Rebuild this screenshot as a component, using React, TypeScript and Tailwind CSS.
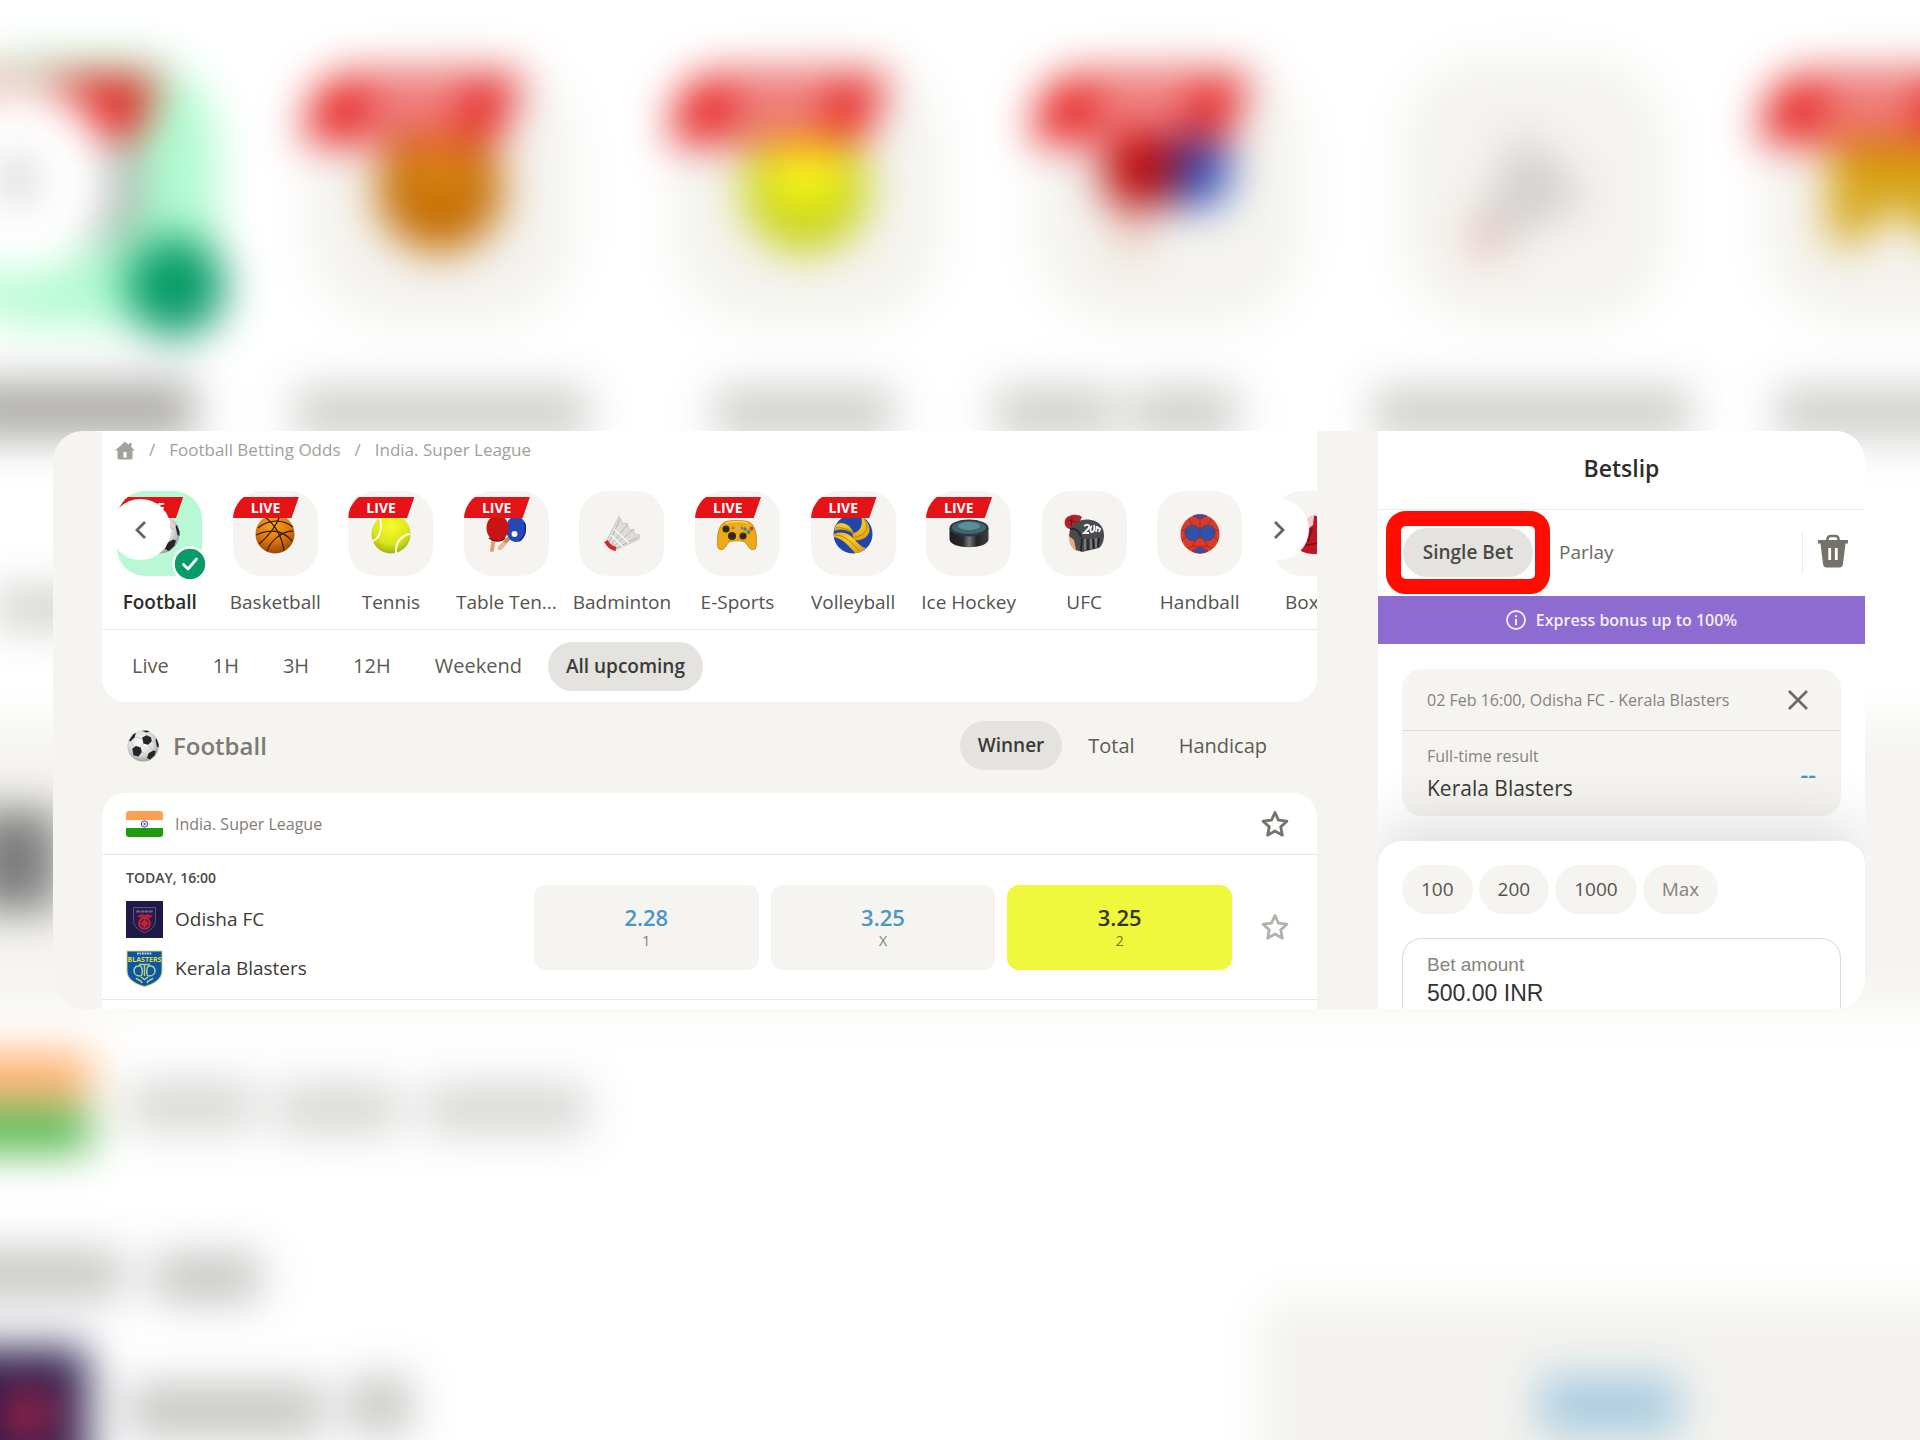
import { useState } from 'react'
import type { ReactNode } from 'react'

function BallGradients() {
  return (
    <svg className="absolute h-0 w-0" aria-hidden="true">
      <defs>
        <radialGradient id="orange" cx="0.45" cy="0.25" r="0.8">
          <stop offset="0" stopColor="#f9a61c" />
          <stop offset="0.55" stopColor="#dc760c" />
          <stop offset="1" stopColor="#8f3f06" />
        </radialGradient>
        <radialGradient id="lime" cx="0.5" cy="0.3" r="0.75">
          <stop offset="0" stopColor="#f7fb2c" />
          <stop offset="0.6" stopColor="#dbe51b" />
          <stop offset="1" stopColor="#93a80d" />
        </radialGradient>
        <radialGradient id="chalk" cx="0.45" cy="0.4" r="0.65">
          <stop offset="0" stopColor="#ffffff" />
          <stop offset="0.6" stopColor="#dcdcdc" />
          <stop offset="1" stopColor="#8f8f8f" />
        </radialGradient>
        <radialGradient id="gold" cx="0.45" cy="0.3" r="0.8">
          <stop offset="0" stopColor="#fbd02a" />
          <stop offset="1" stopColor="#dc9912" />
        </radialGradient>
        <linearGradient id="puck" x1="0" x2="1">
          <stop offset="0" stopColor="#1c1c1e" />
          <stop offset="0.35" stopColor="#2c2c2e" />
          <stop offset="0.5" stopColor="#77777a" />
          <stop offset="0.7" stopColor="#242426" />
          <stop offset="1" stopColor="#3f3f42" />
        </linearGradient>
      </defs>
    </svg>
  )
}

function FootballIcon({ className = 'h-10 w-10' }: { className?: string }) {
  return (
    <svg viewBox="0 0 40 40" className={className} aria-hidden="true">
      <circle cx="20" cy="20" r="19.5" fill="url(#chalk)" />
      <g fill="#26262a">
        <path d="M19 9.500l5.500-3 5.500 2.500 1 5-4.500 4.500-6-1.500z" />
        <path d="M6.500 23.500l4.500-3.500 6 1.500 1.500 6-4 5.500-6.500-1.500z" />
        <path d="M27 29l6-3.500 3 1-1.500 5-5.500 5.500-4-2z" />
        <path d="M2.500 13l5-7.500 3.500-2-1.500 6-5.500 5z" />
        <path d="M35.500 12l1.500-1 2.500 6.500v4.500l-2-1z" />
        <path d="M18.500 1l6-.5 4 1.500-4 1z" />
      </g>
      <path d="M11 9l8 2M20 17l-4 5M27 18.500l5 7M18.500 27l7 5M31 14l5 2M5 14l3 7" stroke="#c4c4c4" fill="none" />
    </svg>
  )
}

function BasketballIcon() {
  return (
    <svg viewBox="0 0 40 40" className="h-10 w-10">
      <circle cx="20" cy="20" r="19.500" fill="url(#orange)" />
      <path
        d="M3 14C14 5 28 5 38 13M1 21c12-6 26-6 36 6M10 3c9 7 17 19 19 34M25 1c-3 10-12 22-21 29M12 37c3-9 14-20 26-20"
        fill="none"
        stroke="#3d1d08"
        strokeWidth="1.300"
      />
    </svg>
  )
}

function TennisIcon() {
  return (
    <svg viewBox="0 0 40 40" className="h-10 w-10">
      <circle cx="20" cy="20" r="19.500" fill="url(#lime)" />
      <path d="M9 4c3 11-1 22-8 23M39 20c-8 1-15 8-14 19" fill="none" stroke="#fbfce4" strokeWidth="2" />
    </svg>
  )
}

function TableTennisIcon() {
  return (
    <svg viewBox="0 0 40 40" className="h-10 w-10">
      <path d="M22 25l-8 9" stroke="#c98c52" strokeWidth="4" strokeLinecap="round" />
      <path d="M18 30l-4 4" stroke="#e8b9a0" strokeWidth="4" strokeLinecap="round" />
      <ellipse cx="30" cy="15" rx="10" ry="13" fill="#2747b4" />
      <path d="M38 8c3 6 1 16-5 19" stroke="#122a85" strokeWidth="1.500" fill="none" />
      <path d="M8 23l-2 13" stroke="#dd9f74" strokeWidth="4" strokeLinecap="round" />
      <ellipse cx="11.500" cy="14" rx="11" ry="13" fill="#c91416" />
      <path d="M3 24c5 4 12 4 16 0" stroke="#7c0a0c" strokeWidth="1.500" fill="none" />
      <circle cx="28.500" cy="20" r="3" fill="#f4f4fa" />
    </svg>
  )
}

function BadmintonIcon() {
  return (
    <svg viewBox="0 0 40 40" className="h-10 w-10">
      <path
        d="M4 28L17 2l4 8 4-1 2 7 5-1 0 5 6 1-1 4-25 12z"
        fill="#deddda"
        stroke="#c3c2be"
        strokeWidth="0.800"
        strokeLinejoin="round"
      />
      <path d="M7 29L18 5M9 31L25 11M11 33l20-17M13 35l23-12" stroke="#b5b4b0" fill="none" />
      <path d="M12 15l15 14M9 21l12 12" stroke="#fafaf8" strokeWidth="1.200" fill="none" />
      <path d="M4 27c2 5 5 8 10 9l-4 3c-5 1-8-2-8-7z" fill="#f1efec" />
      <path d="M4 27c2 4 5 7 10 8" stroke="#cf2a28" strokeWidth="4" fill="none" />
    </svg>
  )
}

function GamepadIcon() {
  return (
    <svg viewBox="0 0 40 40" className="h-10 w-10">
      <path
        d="M8 8c4-2 20-2 24 0 4 2 6 6 7 12 1 7 1 13-1 15-4 2-6-1-9-6-2-3-16-3-18 0-3 5-5 8-9 6-2-2-2-8-1-15 1-6 3-10 7-12z"
        fill="#eea916"
        stroke="#c27e0a"
        strokeWidth="0.800"
      />
      <path d="M9 9c6-2 16-2 22 0" stroke="#fbd75b" strokeWidth="1.500" fill="none" />
      <circle cx="9" cy="15" r="3.500" fill="#30280f" />
      <circle cx="15" cy="22" r="4" fill="#30280f" />
      <circle cx="26" cy="22" r="3.500" fill="#30280f" />
      <circle cx="16" cy="14" r="1.200" fill="#8a7a30" />
      <circle cx="20.500" cy="14" r="2" fill="#c2ba7b" />
      <circle cx="25" cy="14" r="1.200" fill="#8a7a30" />
      <circle cx="31" cy="11.500" r="1.700" fill="#d4c51a" />
      <circle cx="34.500" cy="14.500" r="1.900" fill="#d0342a" />
      <circle cx="28" cy="15" r="1.700" fill="#3c7fb5" />
      <circle cx="31.500" cy="18" r="1.900" fill="#3e9a47" />
    </svg>
  )
}

function VolleyballIcon() {
  return (
    <svg viewBox="0 0 40 40" className="h-10 w-10">
      <circle cx="20" cy="20" r="19.500" fill="#1f46ad" />
      <path d="M3 11C8 7 17 9 21 20c-6-4-13-6-20-3z" fill="url(#gold)" />
      <path d="M28 2c7 5 10 12 8 17-3 6-9 8-15 7l-2-7c7 0 12-7 9-17z" fill="url(#gold)" />
      <path d="M1 20c8-3 15-1 20 5 5 5 7 8 12 9-3 3-7 5-11 5C15 31 10 25 1 23z" fill="url(#gold)" />
      <path d="M3 14c7-1 13 1 18 6M32 6c4 7 1 16-10 17M2 21c10 0 17 8 24 16" stroke="#b27a0c" strokeWidth="0.900" fill="none" />
    </svg>
  )
}

function PuckIcon() {
  return (
    <svg viewBox="0 0 40 40" className="h-10 w-10">
      <path d="M.5 14v11c0 11 39 11 39 0V14z" fill="url(#puck)" />
      <ellipse cx="20" cy="14" rx="19.500" ry="8.500" fill="#2a3a40" />
      <ellipse cx="20" cy="13.500" rx="17" ry="6.500" fill="#41666f" />
      <ellipse cx="20" cy="12" rx="11" ry="4" fill="#5d8f9b" />
    </svg>
  )
}

function UfcIcon() {
  return (
    <svg viewBox="0 0 40 40" className="h-10 w-10">
      <path d="M5 20c-1 8 2 15 8 17l4-14z" fill="#eba980" />
      <path d="M1 6c2-5 12-7 17-3l-4 8-9 4C1 13 0 10 1 6z" fill="#b3222c" />
      <path d="M4 6l11 3M8 3l-1 9" stroke="#6f0f18" fill="none" />
      <path d="M6 15c3-5 10-11 21-9 8 1 13 7 13 15 0 6-2 11-5 13l-17 4-6-2-2-10-5-4z" fill="#4a4b4e" />
      <path d="M6 15c4-1 9 1 11 8" stroke="#26272a" strokeWidth="2" fill="none" />
      <path d="M18 24l-1 13M24 25v11M29 25l1 10M35 24l-1 9" stroke="#1c1c1f" strokeWidth="1.500" fill="none" />
      <path d="M21 25v11M27 25v10M32 24v10" stroke="#929396" strokeWidth="1.300" fill="none" />
      <path
        d="M20 12c4-3 7 0 4 3l-4 4h5M28 12c-2 1-2 6 0 6s3-4 2-7M33 12l-1 6M33 13l3 2-1 3"
        stroke="#f3f3f3"
        strokeWidth="1.900"
        fill="none"
      />
    </svg>
  )
}

function HandballIcon() {
  return (
    <svg viewBox="0 0 40 40" className="h-10 w-10">
      <circle cx="20" cy="20" r="19.500" fill="#d83a2b" />
      <g fill="#2e53a8" stroke="#8e2a35" strokeWidth="0.600">
        <path d="M5 16l3-4 6-1 6 4v8l-5 4-6-1-4-5z" />
        <path d="M20 15l6-4 6 1 3 4v5l-4 5-6 1-5-4z" />
        <path d="M13 2c4-2 10-2 14 0l-7 3z" />
        <path d="M12 37l8-4 8 4c-4 3-12 3-16 0z" />
      </g>
      <path
        d="M20 5v10M12 11L9 5M28 11l3-6M15 27l-2 5 7 1M25 27l2 5-7 1M5 16l-4 1M35 16l4 1M6 22l-4 5M34 22l4 5M13 32l-5 2M27 32l5 2"
        stroke="#97241d"
        strokeWidth="0.700"
        fill="none"
      />
    </svg>
  )
}

function BoxingIcon() {
  return (
    <svg viewBox="0 0 40 40" className="h-10 w-10">
      <path d="M12 12C11 3 16 1 23 2s15 8 13 17c-1 5-4 7-5 9l2 8c-6 4-18 6-27 1 0-8 6-12 6-25z" fill="#bd1624" />
      <path d="M9 7c3-4 6-5 10-5l-1 9-5 4z" fill="#f0ccd0" />
      <path d="M11 31l18-3M17 14l-4 14" stroke="#73101a" strokeWidth="1.500" fill="none" />
    </svg>
  )
}

function HomeIcon() {
  return (
    <svg viewBox="0 0 20 19" className="h-[19px] w-5" fill="none" aria-hidden="true">
      <path d="M10 0.500L14 4V2h2.500v4.200L20 9.500h-2.500V16a2 2 0 01-2 2.500h-11a2 2 0 01-2-2.500V9.500H0z" fill="#a3a199" />
      <path d="M8.500 11h3v5.500h-3z" fill="#fff" />
    </svg>
  )
}

function Chevron({ d }: { d: string }) {
  return (
    <svg viewBox="0 0 16 20" className="h-5 w-4" fill="none" stroke="#66645e" strokeWidth="2.800" aria-hidden="true">
      <path d={d} />
    </svg>
  )
}

function StarIcon() {
  return (
    <svg viewBox="0 0 28 28" className="h-7 w-7" fill="none" stroke="currentColor" strokeWidth="2.800" aria-hidden="true">
      <path
        d="M14 2.500l3.500 7.700 8.400 1-6.200 5.700 1.700 8.300L14 21l-7.400 4.200 1.700-8.300-6.200-5.700 8.400-1z"
        strokeLinejoin="round"
      />
    </svg>
  )
}

function TrashIcon() {
  return (
    <svg viewBox="0 0 30 34" className="h-[34px] w-[30px]" fill="none" aria-hidden="true">
      <path d="M9.500 6.500V5a3 3 0 013-3h5a3 3 0 013 3v1.500" stroke="#75726a" strokeWidth="2.600" />
      <path d="M0 6h30v3.500h-2.500L25 30a4 4 0 01-4 3.500H9A4 4 0 015 30L2.500 9.500H0z" fill="#75726a" />
      <path d="M11.700 14v12M18.300 14v12" stroke="#fff" strokeWidth="2.800" />
    </svg>
  )
}

function IndiaFlag() {
  return (
    <svg viewBox="0 0 37 26" className="h-[26px] w-[37px] rounded-[3px]" aria-hidden="true">
      <path fill="#ff9f50" d="M0 0h37v9H0z" />
      <path fill="#fff" d="M0 9h37v8H0z" />
      <path fill="#1f9a10" d="M0 17h37v9H0z" />
      <circle cx="18.500" cy="13" r="3.200" fill="#e4e4f6" stroke="#4a4bb0" />
      <circle cx="18.500" cy="13" r="1" fill="#4a4bb0" />
    </svg>
  )
}

function OdishaLogo() {
  return (
    <svg viewBox="0 0 37 37" className="h-[37px] w-[37px]" aria-hidden="true">
      <path fill="#1d1a48" d="M0 0h37v37H0z" />
      <path d="M7.500 6.500h22v13c0 6-5 10-11 12-6-2-11-6-11-12z" fill="#2a1a4a" stroke="#65568a" strokeWidth="0.900" />
      <path d="M10.500 10.500h4M15.500 10.500h3M19.500 10.500h3M23.500 10.500h3" stroke="#8f83b0" strokeWidth="2" strokeDasharray="1.400 .5" />
      <path d="M11 15l5-2 3 1 3-1 5 2-3 2h-10z" fill="#b3203c" />
      <circle cx="18.500" cy="22.500" r="5.500" fill="#6e1838" stroke="#bd2842" strokeWidth="1.600" />
      <circle cx="18.500" cy="22.500" r="2.200" fill="none" stroke="#d02b45" strokeWidth="1.200" />
      <path d="M18.500 17v11M13 22.500h11" stroke="#d02b45" strokeWidth="0.700" />
    </svg>
  )
}

function KeralaLogo() {
  return (
    <svg viewBox="0 0 37 37" className="h-[37px] w-[37px]" aria-hidden="true">
      <path d="M1 1h35v20c0 8-8 13-17.500 15.500C9 34 1 29 1 21z" fill="#0d56a5" stroke="#c9d36a" strokeWidth="1" />
      <path d="M11 3.500h15" stroke="#c6d8ec" strokeWidth="2" strokeDasharray="1.800 .7" />
      <text
        x="18.500"
        y="11.500"
        textAnchor="middle"
        fontFamily="Open Sans, sans-serif"
        fontWeight="700"
        fontSize="7"
        fill="#e3dd3c"
      >
        BLASTERS
      </text>
      <path
        d="M13 14.500h11M14 16c-8-1-8 10 0 10 3 0 3-9 0-10zM23 16c8-1 8 10 0 10-3 0-3-9 0-10zM18.500 15v11M15 27l3.500 2.500L22 27M10 28c2 3 5 1 6 5M27 28c-2 3-5 1-6 5"
        stroke="#b6cf83"
        strokeWidth="1.500"
        fill="none"
      />
    </svg>
  )
}

type Sport = { name: string; live?: boolean; icon: ReactNode }

const SPORTS: Sport[] = [
  { name: 'Football', live: true, icon: <FootballIcon /> },
  { name: 'Basketball', live: true, icon: <BasketballIcon /> },
  { name: 'Tennis', live: true, icon: <TennisIcon /> },
  { name: 'Table Ten...', live: true, icon: <TableTennisIcon /> },
  { name: 'Badminton', icon: <BadmintonIcon /> },
  { name: 'E-Sports', live: true, icon: <GamepadIcon /> },
  { name: 'Volleyball', live: true, icon: <VolleyballIcon /> },
  { name: 'Ice Hockey', live: true, icon: <PuckIcon /> },
  { name: 'UFC', icon: <UfcIcon /> },
  { name: 'Handball', icon: <HandballIcon /> },
  { name: 'Boxing', icon: <BoxingIcon /> },
]

const PERIODS = ['Live', '1H', '3H', '12H', 'Weekend', 'All upcoming']
const MARKETS = ['Winner', 'Total', 'Handicap']
const ODDS = [
  { outcome: '1', price: '2.28' },
  { outcome: 'X', price: '3.25' },
  { outcome: '2', price: '3.25' },
]
const TEAMS = [
  { name: 'Odisha FC', logo: <OdishaLogo /> },
  { name: 'Kerala Blasters', logo: <KeralaLogo /> },
]
const STAKES = ['100', '200', '1000', 'Max']

function PillGroup({ items, value, onChange }: { items: string[]; value: string; onChange: (v: string) => void }) {
  return (
    <div className="flex gap-2">
      {items.map((item) => (
        <button
          key={item}
          type="button"
          onClick={() => onChange(item)}
          className={`h-[49px] rounded-full px-[18px] whitespace-nowrap ${
            item === value ? 'bg-[#e4e3df] text-[19px] font-semibold text-[#3b3a37]' : 'text-[20px] text-[#5c5a55]'
          }`}
        >
          {item}
        </button>
      ))}
    </div>
  )
}

/* Enlarged, out-of-focus view of the sport list that fills the window behind the card */
function Backdrop() {
  return (
    <svg
      className="absolute inset-0 h-full w-full"
      viewBox="135 473 610 457"
      preserveAspectRatio="xMidYMid slice"
      aria-hidden="true"
    >
      <defs>
        <filter id="soft" x="-10%" y="-10%" width="120%" height="120%" colorInterpolationFilters="sRGB">
          <feGaussianBlur stdDeviation="7" />
        </filter>
      </defs>
      <g filter="url(#soft)">
        <path fill="#fff" d="M80 420h720v570H80z" />
        <path fill="#f5f4f0" d="M80 702h720v91H80z" />
        <rect x="118" y="491" width="86" height="85" rx="28" fill="#b0fbd0" />
        {[233, 349, 464, 580, 695].map((x) => (
          <rect key={x} x={x} y="491" width="85" height="85" rx="28" fill="#f4f3ef" />
        ))}
        <circle cx="160" cy="533" r="20" fill="#9b9b9b" />
        <circle cx="275" cy="533" r="20" fill="#c46c00" />
        <circle cx="275" cy="526" r="8" fill="#e09420" />
        <circle cx="391" cy="533" r="20" fill="#c6d010" />
        <circle cx="391" cy="527" r="12" fill="#fbf81e" />
        <path d="M492 540l8 12-9 0z" fill="#dca27b" />
        <circle cx="514" cy="527" r="12" fill="#2747b4" />
        <circle cx="497" cy="528" r="12" fill="#b80808" />
        <path d="M617 514l23 22-26 12-8-4z" fill="#d0cfcc" />
        <path d="M602 541l12 9-9 5z" fill="#e09896" />
        <path d="M716 518h43v32h-9l-10-10h-8l-5 10h-11z" fill="#d6a312" />
        {[233, 349, 464, 695].map((x) => (
          <g key={x}>
            <path d={`M${x - 1} 518c0-10 4-18 12-21h57l-8 21z`} fill="#e61818" />
            <path d={`M${x + 18} 501h32v13h-32z`} fill="#f29090" />
          </g>
        ))}
        <path d="M118 518c0-10 4-18 12-21h56l-8 21z" fill="#e61818" />
        <circle cx="141" cy="530" r="31" fill="#fff" />
        <path d="M144 524l-6 6 6 6" stroke="#777" strokeWidth="3" fill="none" />
        <circle cx="191" cy="564" r="16" fill="#079b68" />
        <path fill="#acaba8" d="M121 594h76v18h-76z" />
        <path
          fill="#cfcecb"
          d="M229 596h93v16h-93zM362 596h57v16h-57zM451 596h38v16h-38zM494 596h34v16h-34zM571 596h101v16H571zM699 596h78v16h-78z"
        />
        <path fill="#cfcecb" d="M133 660h36v12h-36zM214 660h24v12h-24z" />
        <path fill="#7c7c7c" d="M126 730h28v32h-28z" />
        <path fill="#ffa65c" d="M116 808h48v14h-48z" />
        <path fill="#3fb038" d="M116 825h48v13h-48z" />
        <path fill="#d8d7d5" d="M176 816h40v16h-40zM223 817h39v16h-39zM270 817h52v16h-52z" />
        <path fill="#c4c3c1" d="M116 870h58v15h-58zM184 871h34v15h-34z" />
        <path fill="#201848" d="M116 901h47v43h-47z" />
        <circle cx="144" cy="922" r="10" fill="#a02448" />
        <path fill="#c6c5c3" d="M176 912h62v17h-62zM246 910h20v18h-20z" />
        <rect x="535" y="885" width="260" height="85" rx="10" fill="#f3f2ee" />
        <path fill="#a6cae0" d="M624 910h44v18h-44z" />
      </g>
    </svg>
  )
}

function SportNav() {
  return (
    <div className="relative overflow-hidden">
      <ul className="-mr-14 grid grid-cols-11">
        {SPORTS.map((sport, i) => (
          <li key={sport.name}>
            <a href="#sport" className="flex flex-col items-center">
              <span className="relative">
                <span
                  className={`relative flex h-[85px] w-[85px] items-center justify-center overflow-hidden rounded-[28px] ${
                    i === 0 ? 'bg-[#b9f8d4]' : 'bg-[#f5f4f0]'
                  }`}
                >
                  {sport.icon}
                  {sport.live && (
                    <span className="absolute top-[6px] left-0 h-[21px] w-[66px] bg-[#e51317] pl-[18px] text-[14px] leading-[21px] font-bold text-white [clip-path:polygon(0_0,100%_0,89%_100%,0_100%)]">
                      LIVE
                    </span>
                  )}
                </span>
                {i === 0 && (
                  <svg viewBox="0 0 36 36" className="absolute -right-[6px] -bottom-[6px] z-10 h-9 w-9" aria-hidden="true">
                    <circle cx="18" cy="18" r="16.500" fill="#079b68" stroke="#fff" strokeWidth="2.500" />
                    <path
                      d="M11.500 18.500l4.500 4.500 8.500-10"
                      fill="none"
                      stroke="#fff"
                      strokeWidth="2.800"
                      strokeLinecap="round"
                      strokeLinejoin="round"
                    />
                  </svg>
                )}
              </span>
              <span
                className={`mt-3 text-[19px] leading-7 whitespace-nowrap ${
                  i === 0 ? 'font-semibold text-[#2d2c29]' : 'text-[#54524e]'
                }`}
              >
                {sport.name}
              </span>
            </a>
          </li>
        ))}
      </ul>
      <button
        type="button"
        aria-label="Previous sports"
        className="absolute top-2 left-2 flex h-[61px] w-[61px] items-center justify-center rounded-full bg-white"
      >
        <Chevron d="M12 2L4 10l8 8" />
      </button>
      <button
        type="button"
        aria-label="More sports"
        className="absolute top-2 right-2 flex h-[61px] w-[61px] items-center justify-center rounded-full bg-white"
      >
        <Chevron d="M4 2l8 8-8 8" />
      </button>
    </div>
  )
}

function Sportsbook() {
  const [period, setPeriod] = useState('All upcoming')
  const [market, setMarket] = useState('Winner')
  const [picked, setPicked] = useState('2')

  return (
    <main className="flex min-w-0 flex-1 flex-col pr-[61px] pl-[49px]">
      <section className="rounded-b-3xl bg-white">
        <nav className="mb-[22px] flex h-[38px] items-center gap-[14px] pl-[13px] text-[17px] text-[#a19f99]">
          <a href="#home" aria-label="Home">
            <HomeIcon />
          </a>
          <span>/</span>
          <a href="#football">Football Betting Odds</a>
          <span>/</span>
          <a href="#league">India. Super League</a>
        </nav>
        <SportNav />
        <div className="mt-[13px] flex h-[73px] items-center border-t border-[#ebeae8] px-3">
          <PillGroup items={PERIODS} value={period} onChange={setPeriod} />
        </div>
      </section>

      <header className="flex h-[91px] items-center justify-between pr-8 pb-1 pl-[25px]">
        <h1 className="flex items-center gap-[14px] text-[24px] font-semibold text-[#7d7a73]">
          <FootballIcon className="h-8 w-8" />
          Football
        </h1>
        <PillGroup items={MARKETS} value={market} onChange={setMarket} />
      </header>

      <section className="flex-1 rounded-t-3xl bg-white">
        <div className="flex h-[62px] items-center border-b border-[#e8e7e5] pl-6">
          <IndiaFlag />
          <h2 className="ml-3 flex-1 text-[16px] text-[#7f7d77]">India. Super League</h2>
          <button type="button" aria-label="Add league to favourites" className="flex w-[85px] justify-center text-[#75736c]">
            <StarIcon />
          </button>
        </div>
        <div className="flex h-[145px] items-center border-b border-[#e8e7e5] pl-6">
          <div className="flex-1">
            <div className="text-[14px] leading-5 font-semibold text-[#4a4945]">TODAY, 16:00</div>
            <div className="mt-[13px] flex flex-col gap-3">
              {TEAMS.map((team) => (
                <div key={team.name} className="flex items-center gap-3 text-[19px] leading-7 text-[#3b3a37]">
                  {team.logo}
                  {team.name}
                </div>
              ))}
            </div>
          </div>
          <div className="grid w-[698px] grid-cols-3 gap-3">
            {ODDS.map((odd) => (
              <button
                key={odd.outcome}
                type="button"
                onClick={() => setPicked(odd.outcome)}
                className={`flex h-[85px] flex-col items-center justify-center rounded-xl ${
                  picked === odd.outcome ? 'bg-[#f0f83e]' : 'bg-[#f5f4f0]'
                }`}
              >
                <span
                  className={`text-[22px] leading-7 font-semibold ${
                    picked === odd.outcome ? 'text-[#343510]' : 'text-[#4a95c8]'
                  }`}
                >
                  {odd.price}
                </span>
                <span className={`text-[14px] leading-5 ${picked === odd.outcome ? 'text-[#72751f]' : 'text-[#7f7d77]'}`}>
                  {odd.outcome}
                </span>
              </button>
            ))}
          </div>
          <button type="button" aria-label="Add match to favourites" className="flex w-[85px] justify-center text-[#b3b1ab]">
            <StarIcon />
          </button>
        </div>
      </section>
    </main>
  )
}

function Betslip() {
  const [amount, setAmount] = useState('500.00 INR')

  return (
    <aside className="w-[487px] shrink-0 overflow-hidden bg-white">
      <h2 className="flex h-[79px] items-center justify-center border-b border-[#efeeec] pb-1 text-[23px] font-semibold text-[#2d2c29]">
        Betslip
      </h2>
      <div className="flex h-[86px] items-center pr-[17px] pb-px pl-[25px] text-[19px]">
        <div className="relative">
          <button type="button" className="h-[49px] w-[130px] rounded-full bg-[#e4e3df] font-semibold text-[#4a4945]">
            Single Bet
          </button>
          <span className="pointer-events-none absolute -inset-[17px] rounded-[20px] border-[15px] border-[#ff0d00]" />
        </div>
        <button type="button" className="ml-2 h-[49px] px-[18px] text-[#6b6963]">
          Parlay
        </button>
        <span className="ml-auto h-[42px] border-l border-[#ebeae8]" />
        <button type="button" aria-label="Clear betslip" className="-mt-1 ml-[15px]">
          <TrashIcon />
        </button>
      </div>
      <div className="flex h-12 items-center justify-center gap-[10px] bg-[#8d6bd0] text-[16px] font-semibold text-[#f3eefc]">
        <svg viewBox="0 0 20 20" className="h-5 w-5" fill="none" stroke="currentColor" strokeWidth="1.800" aria-hidden="true">
          <circle cx="10" cy="10" r="9" />
          <path d="M10 9v6M10 5.200v2" strokeWidth="2" />
        </svg>
        Express bonus up to 100%
      </div>

      <div className="px-6 py-[25px]">
        <div className="rounded-[20px] bg-[#f5f4f0]">
          <div className="flex h-[62px] items-center justify-between border-b border-[#dcdbd7] pr-[33px] pl-[25px]">
            <span className="text-[16px] text-[#85837c]">02 Feb 16:00, Odisha FC - Kerala Blasters</span>
            <button type="button" aria-label="Remove bet">
              <svg viewBox="0 0 20 20" className="h-5 w-5" stroke="#6b6963" strokeWidth="2.600" aria-hidden="true">
                <path d="M1 1l18 18M19 1L1 19" />
              </svg>
            </button>
          </div>
          <div className="flex h-[85px] items-center justify-between pr-[25px] pl-[25px]">
            <div>
              <div className="text-[16px] leading-6 text-[#85837c]">Full-time result</div>
              <div className="mt-1 text-[21px] leading-8 text-[#3b3a37]">Kerala Blasters</div>
            </div>
            <span className="text-[24px] leading-7 font-semibold text-[#4a93ba]">--</span>
          </div>
        </div>
      </div>

      <div className="relative rounded-t-3xl bg-white px-6 pt-6 shadow-[0_-20px_60px_rgba(0,0,0,0.13)]">
        <div className="flex gap-[6px]">
          {STAKES.map((stake) => (
            <button
              key={stake}
              type="button"
              className={`h-[49px] rounded-full bg-[#f5f4f0] px-[19px] text-[19px] ${
                stake === 'Max' ? 'text-[#85837c]' : 'text-[#55534e]'
              }`}
            >
              {stake}
            </button>
          ))}
        </div>
        <div className="mt-6 rounded-t-[20px] border border-b-0 border-[#dddcd9] px-6 pt-[14px] font-['Liberation_Sans',sans-serif]">
          <label htmlFor="amount" className="block text-[19px] leading-6 text-[#85837c]">
            Bet amount
          </label>
          <input
            id="amount"
            value={amount}
            onChange={(e) => setAmount(e.target.value)}
            className="block h-8 w-full bg-transparent text-[23px] leading-8 text-[#333230] outline-none"
          />
        </div>
      </div>
    </aside>
  )
}

export default function App() {
  return (
    <div className="relative flex min-h-screen items-center overflow-hidden bg-white pr-[55px] pl-[53px] font-['Open_Sans',sans-serif]">
      <BallGradients />
      <Backdrop />
      <div className="relative flex min-w-0 flex-1 overflow-hidden rounded-[30px] bg-[#f5f4f0]">
        <Sportsbook />
        <Betslip />
      </div>
    </div>
  )
}
